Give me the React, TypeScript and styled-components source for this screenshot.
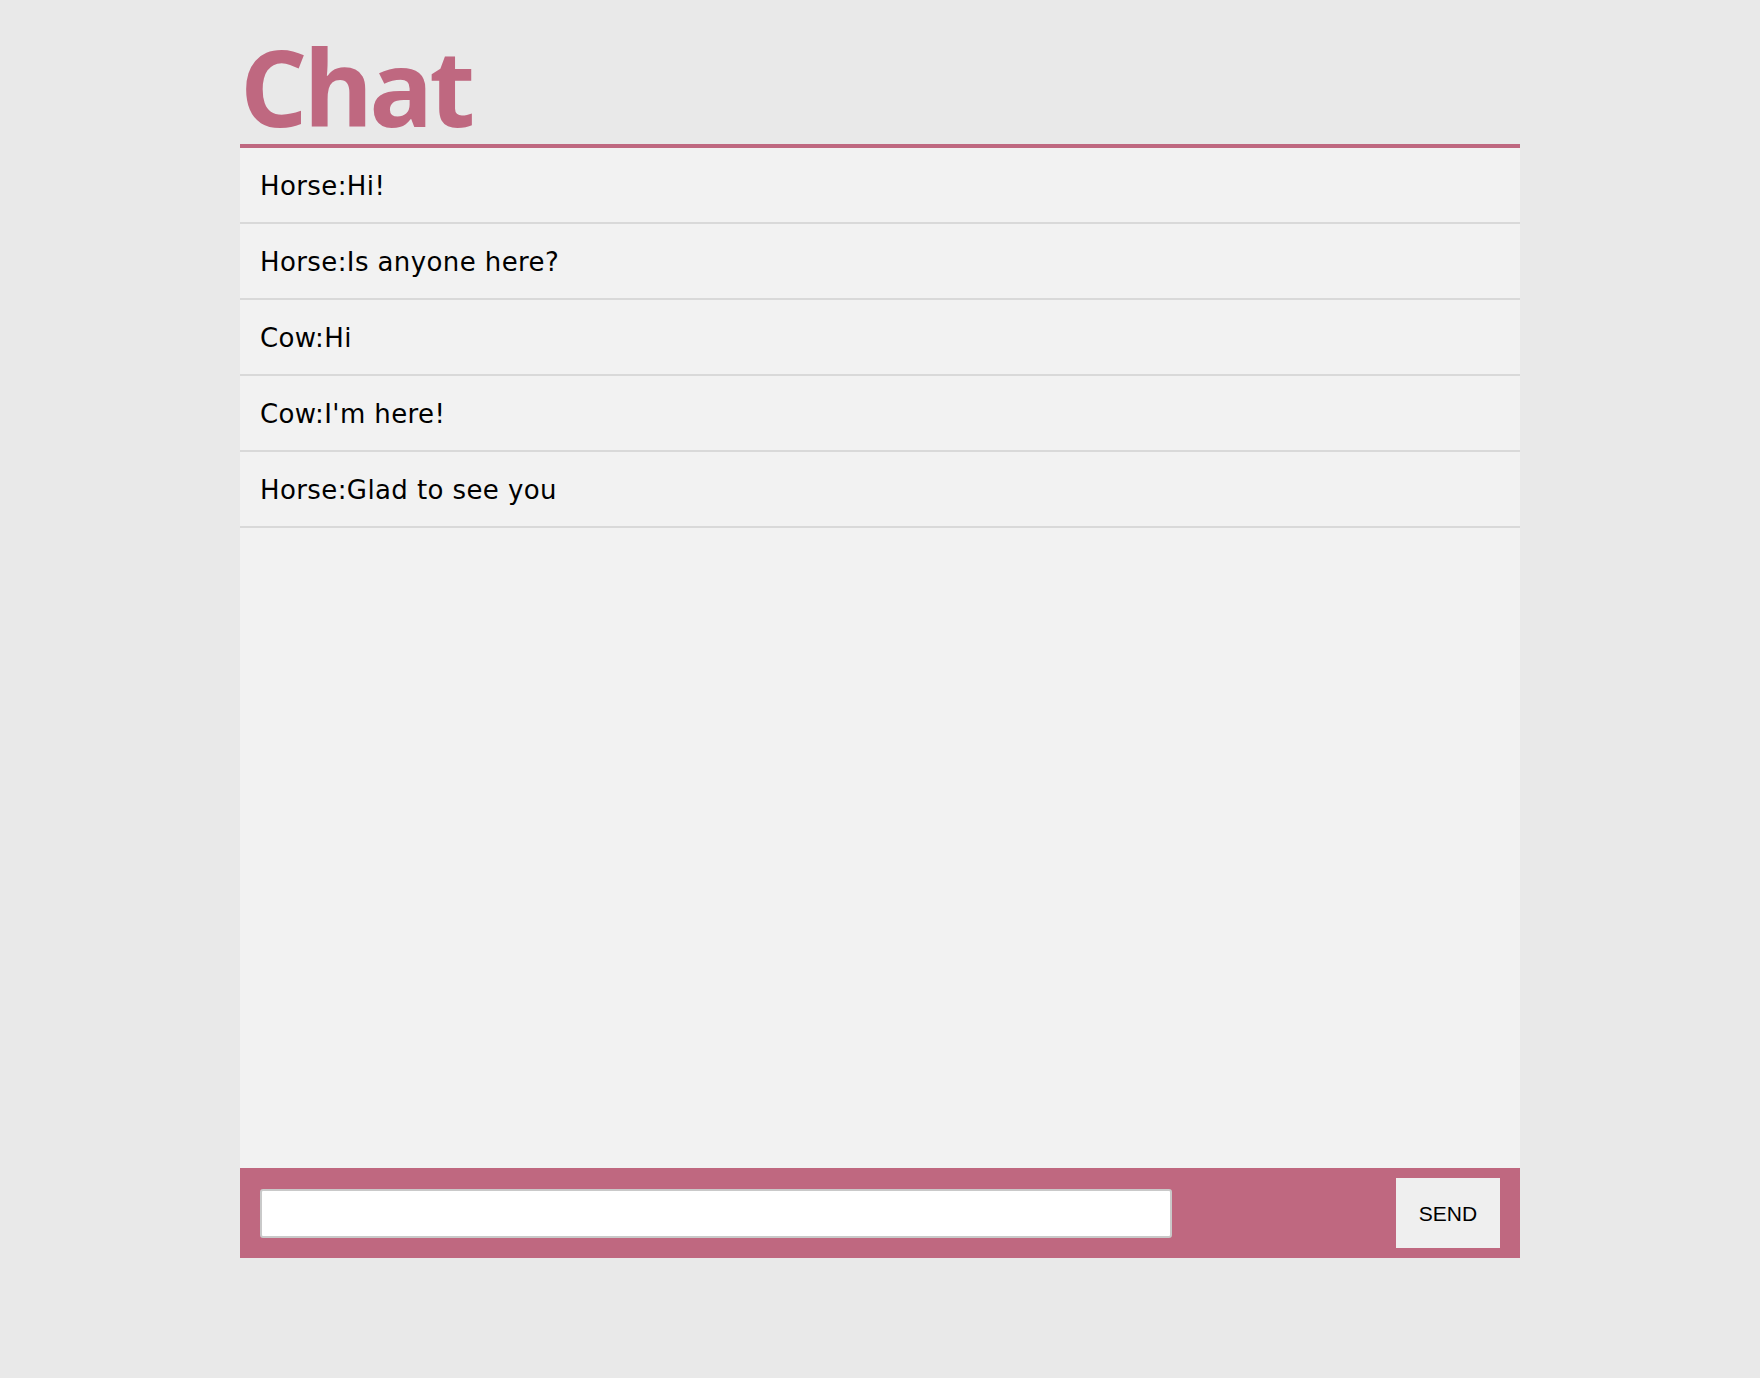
import React from "react";
import styled, { createGlobalStyle } from "styled-components";

const GlobalStyle = createGlobalStyle`
  html, body {
    margin: 0;
    padding: 0;
    background: #e9e9e9;
  }
  body {
    font-family: "DejaVu Sans", "Open Sans", sans-serif;
  }
`;

const Page = styled.div`
  width: 1280px;
  margin: 0 auto;
  display: flex;
  flex-direction: column;
`;

const Header = styled.header`
  padding: 33px 0 5px 0;
  border-bottom: 4px solid #bf6880;
`;

const Title = styled.h1`
  margin: 0;
  font-family: "Open Sans", "DejaVu Sans", sans-serif;
  font-weight: 700;
  font-size: 106px;
  line-height: 106px;
  color: #bf6880;
  letter-spacing: -4px;
`;

const Messages = styled.ul`
  list-style: none;
  margin: 0;
  padding: 0;
  height: 1020px;
  background: #f2f2f2;
  display: flex;
  flex-direction: column;
`;

const Message = styled.li`
  padding: 21px 20px 19px;
  line-height: 34px;
  font-size: 26px;
  letter-spacing: 0.4px;
  color: #000;
  border-bottom: 2px solid #d9d9d9;
`;

const Footer = styled.form`
  height: 90px;
  background: #bf6880;
  display: flex;
  align-items: center;
  justify-content: space-between;
  padding: 0 20px;
  box-sizing: border-box;
`;

const Input = styled.input`
  width: 912px;
  height: 49px;
  box-sizing: border-box;
  border: 2px solid #c9c9c9;
  border-radius: 3px;
  background: #fff;
  outline: none;
  font-size: 20px;
  margin: 0;
`;

const SendButton = styled.button`
  width: 104px;
  height: 70px;
  border: none;
  background: #efefef;
  font-family: "Liberation Sans", Arial, sans-serif;
  font-size: 21px;
  color: #000;
  padding: 2px 0 0;
  margin: 0;
  cursor: pointer;
`;

const messages = [
  "Horse:Hi!",
  "Horse:Is anyone here?",
  "Cow:Hi",
  "Cow:I'm here!",
  "Horse:Glad to see you",
];

export default function App() {
  return (
    <>
      <GlobalStyle />
      <Page>
        <Header>
          <Title>Chat</Title>
        </Header>
        <Messages>
          {messages.map((m, i) => (
            <Message key={i}>{m}</Message>
          ))}
        </Messages>
        <Footer onSubmit={(e) => e.preventDefault()}>
          <Input type="text" />
          <SendButton type="submit">SEND</SendButton>
        </Footer>
      </Page>
    </>
  );
}
